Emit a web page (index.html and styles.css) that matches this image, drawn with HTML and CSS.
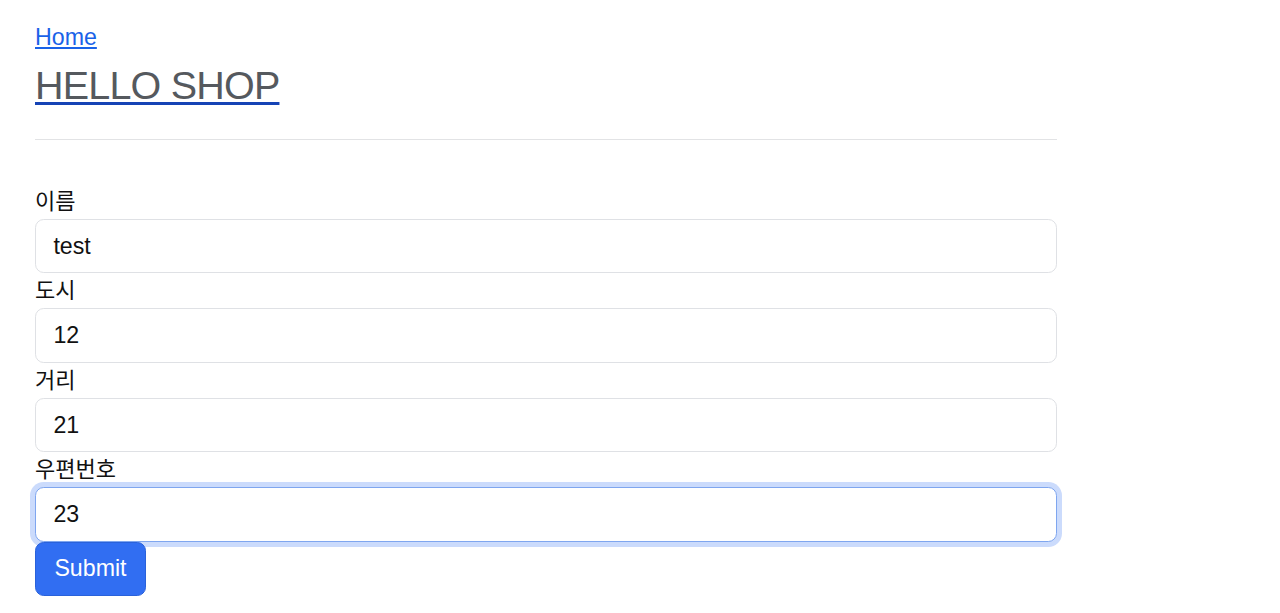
FILE: index.html
```html
<!DOCTYPE html>
<html lang="ko">
<head>
<meta charset="utf-8">
<title>HELLO SHOP</title>
<link rel="stylesheet" href="styles.css">
</head>
<body>
<div class="container">
  <div class="header">
    <a class="home-link" href="#">Home</a>
    <h3 class="title"><a class="title-link" href="#">HELLO SHOP</a></h3>
  </div>
  <hr class="divider">
  <form class="form">
    <label class="form-label" for="name">이름</label>
    <input class="form-control" id="name" type="text" value="test">
    <label class="form-label" for="city">도시</label>
    <input class="form-control" id="city" type="text" value="12">
    <label class="form-label" for="street">거리</label>
    <input class="form-control" id="street" type="text" value="21">
    <label class="form-label" for="zipcode">우편번호</label>
    <input class="form-control focused" id="zipcode" type="text" value="23">
    <div class="actions">
      <button class="btn-primary" type="button">Submit</button>
    </div>
  </form>
</div>
</body>
</html>
```

FILE: styles.css
```css
html, body {
  margin: 0;
  padding: 0;
  background: #ffffff;
}

body {
  font-family: "Liberation Sans", "Noto Sans CJK KR", sans-serif;
  font-size: 23.2px;
  line-height: 34.8px;
  color: #212529;
}

.container {
  width: 1022px;
  padding: 20px 35px 0 35px;
}

.header {
  display: flex;
  flex-direction: column;
  align-items: flex-start;
}

.home-link {
  color: #1a62e8;
  text-decoration: underline;
  text-decoration-thickness: 1.5px;
  text-underline-offset: 2px;
}

.title {
  margin: 6px 0 0 0;
  font-size: 39.5px;
  line-height: 48px;
  font-weight: 400;
  letter-spacing: -0.8px;
}

.title-link {
  color: #55595e;
  text-decoration: underline;
  text-decoration-color: #1543b5;
  text-decoration-thickness: 3px;
  text-underline-offset: 3px;
}

.divider {
  margin: 30px 0 44px 0;
  border: 0;
  border-top: 1px solid #e2e3e5;
  height: 0;
}

.form {
  display: flex;
  flex-direction: column;
  align-items: stretch;
}

.form-label {
  display: block;
  font-size: 22px;
  line-height: 35px;
  height: 35px;
  color: #111111;
}

.form-control {
  box-sizing: border-box;
  display: block;
  width: 100%;
  height: 54.5px;
  margin: 0;
  padding: 0 17.4px;
  font-family: "Liberation Sans", "Noto Sans CJK KR", sans-serif;
  font-size: 23.2px;
  color: #111111;
  background: #ffffff;
  border: 1.5px solid #dfe1e5;
  border-radius: 8.7px;
  outline: none;
}

.form-control.focused {
  border-color: #7fa6ef;
  box-shadow: 0 0 0 5px rgba(49, 110, 242, 0.25);
}

.actions {
  display: flex;
}

.btn-primary {
  box-sizing: border-box;
  height: 54px;
  padding: 0 18.4px;
  font-family: "Liberation Sans", "Noto Sans CJK KR", sans-serif;
  font-size: 23.2px;
  color: #ffffff;
  background: #316ef2;
  border: 1.5px solid #2a62da;
  border-radius: 8.7px;
}
```
